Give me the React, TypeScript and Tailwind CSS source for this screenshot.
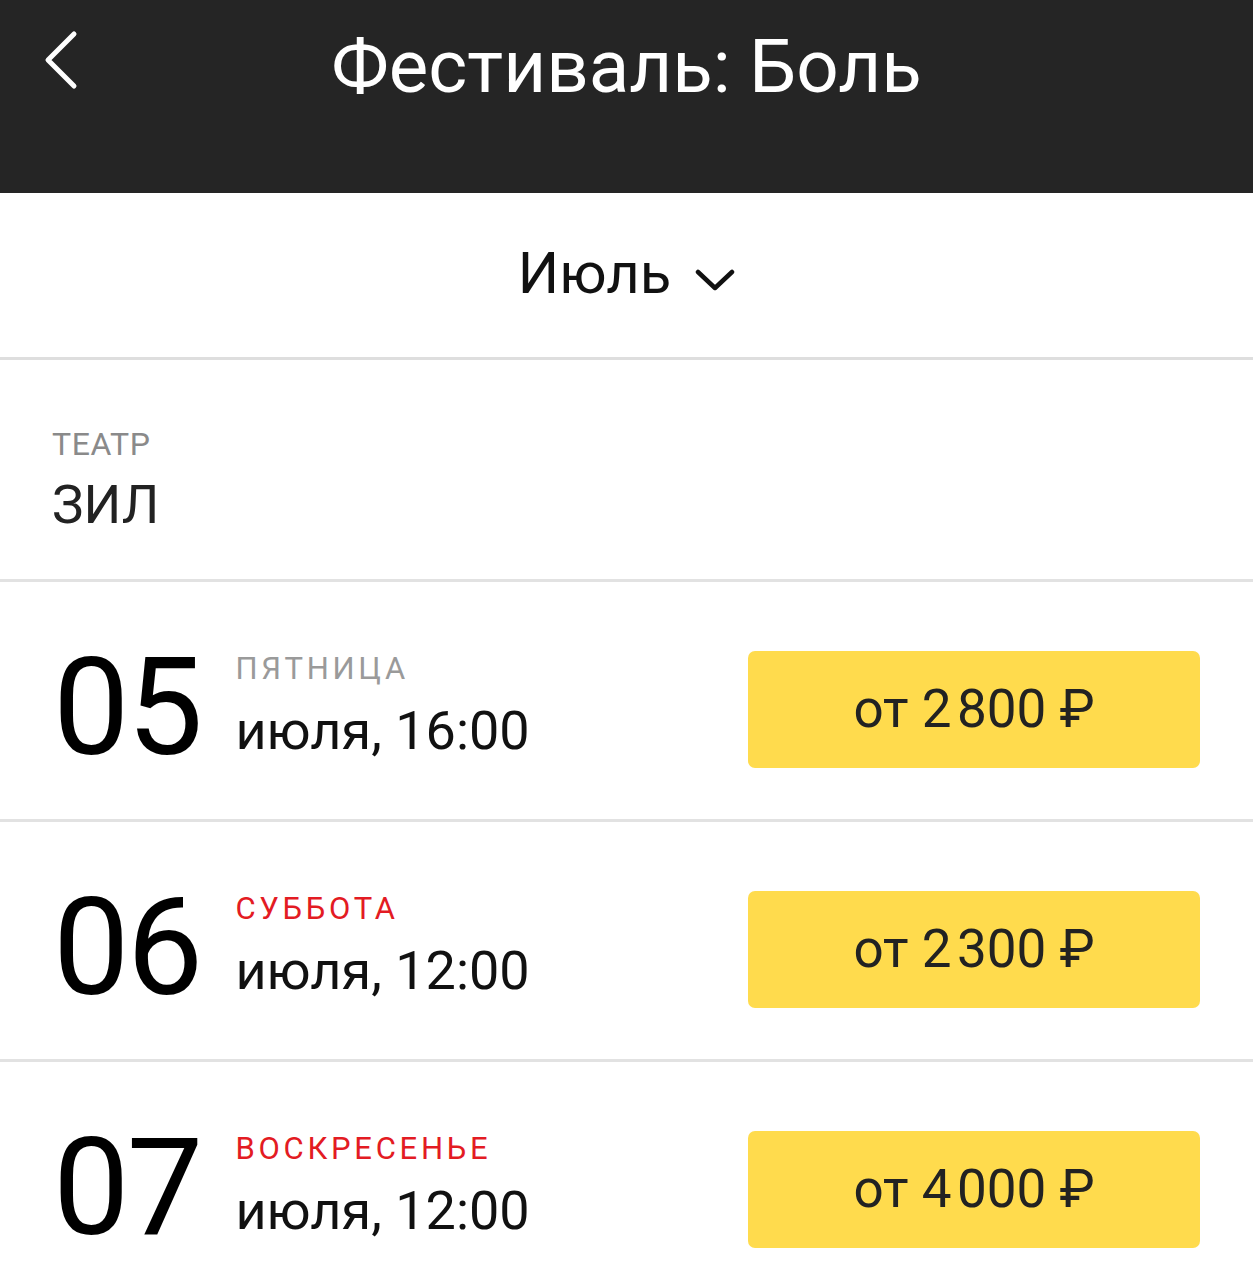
const SESSIONS = [
  { day: '05', weekday: 'пятница', weekend: false, time: 'июля, 16:00', price: '2\u200A800' },
  { day: '06', weekday: 'суббота', weekend: true, time: 'июля, 12:00', price: '2\u200A300' },
  { day: '07', weekday: 'воскресенье', weekend: true, time: 'июля, 12:00', price: '4\u200A000' },
];

function BackIcon() {
  return (
    <svg width="40" height="60" viewBox="0 0 40 60" fill="none">
      <path d="M34 4 L8 30 L34 56" stroke="#fff" strokeWidth="5" strokeLinecap="round" strokeLinejoin="round" />
    </svg>
  );
}

function ChevronDown() {
  return (
    <svg width="40" height="24" viewBox="0 0 40 24" fill="none">
      <path d="M3 4 L20 20 L37 4" stroke="#111" strokeWidth="4.5" strokeLinecap="round" strokeLinejoin="round" />
    </svg>
  );
}

export default function App() {
  return (
    <div className="min-h-[1280px] w-full overflow-hidden bg-white font-['Roboto',sans-serif]">
      <header className="flex h-[193px] items-start bg-[#252525] px-[40px] pt-[30px]">
        <div className="w-[120px] shrink-0">
          <BackIcon />
        </div>
        <h1 className="flex-1 text-center text-[74.5px] font-normal leading-none text-white">
          Фестиваль: Боль
        </h1>
        <div className="w-[120px] shrink-0" />
      </header>

      <div className="flex h-[167px] items-start justify-center border-b-[3px] border-[#dedede] pt-[51px]">
        <span className="text-[58px] leading-none text-[#111]">Июль</span>
        <span className="ml-[24px] mt-[24px]">
          <ChevronDown />
        </span>
      </div>

      <section className="border-b-[3px] border-[#e2e2e2] px-[52px] pb-[47px] pt-[68px]">
        <p className="text-[32px] uppercase leading-none tracking-[0.02em] text-[#8a8a8a]">Театр</p>
        <p className="mt-[19px] text-[53px] leading-none text-[#222]">ЗИЛ</p>
      </section>

      {SESSIONS.map((s) => (
        <div
          key={s.day}
          className="flex h-[240px] items-start border-b-[3px] border-[#e2e2e2] pl-[53px] pr-[53px] pt-[58px]"
        >
          <span className="text-[136px] leading-none tracking-[-0.02em] text-black">{s.day}</span>
          <div className="ml-[35px] mt-[13px] flex flex-col">
            <span
              className={`text-[31px] uppercase leading-none tracking-[0.12em] ${
                s.weekend ? 'text-[#e31b23]' : 'text-[#9a9a9a]'
              }`}
            >
              {s.weekday}
            </span>
            <span className="mt-[20px] text-[54px] leading-none text-[#111]">{s.time}</span>
          </div>
          <button className="ml-auto mt-[11px] flex h-[117px] w-[452px] items-center justify-center rounded-[7px] bg-[#ffdb4d] text-[53px] leading-none text-[#222]">
            от {s.price} ₽
          </button>
        </div>
      ))}
    </div>
  );
}
